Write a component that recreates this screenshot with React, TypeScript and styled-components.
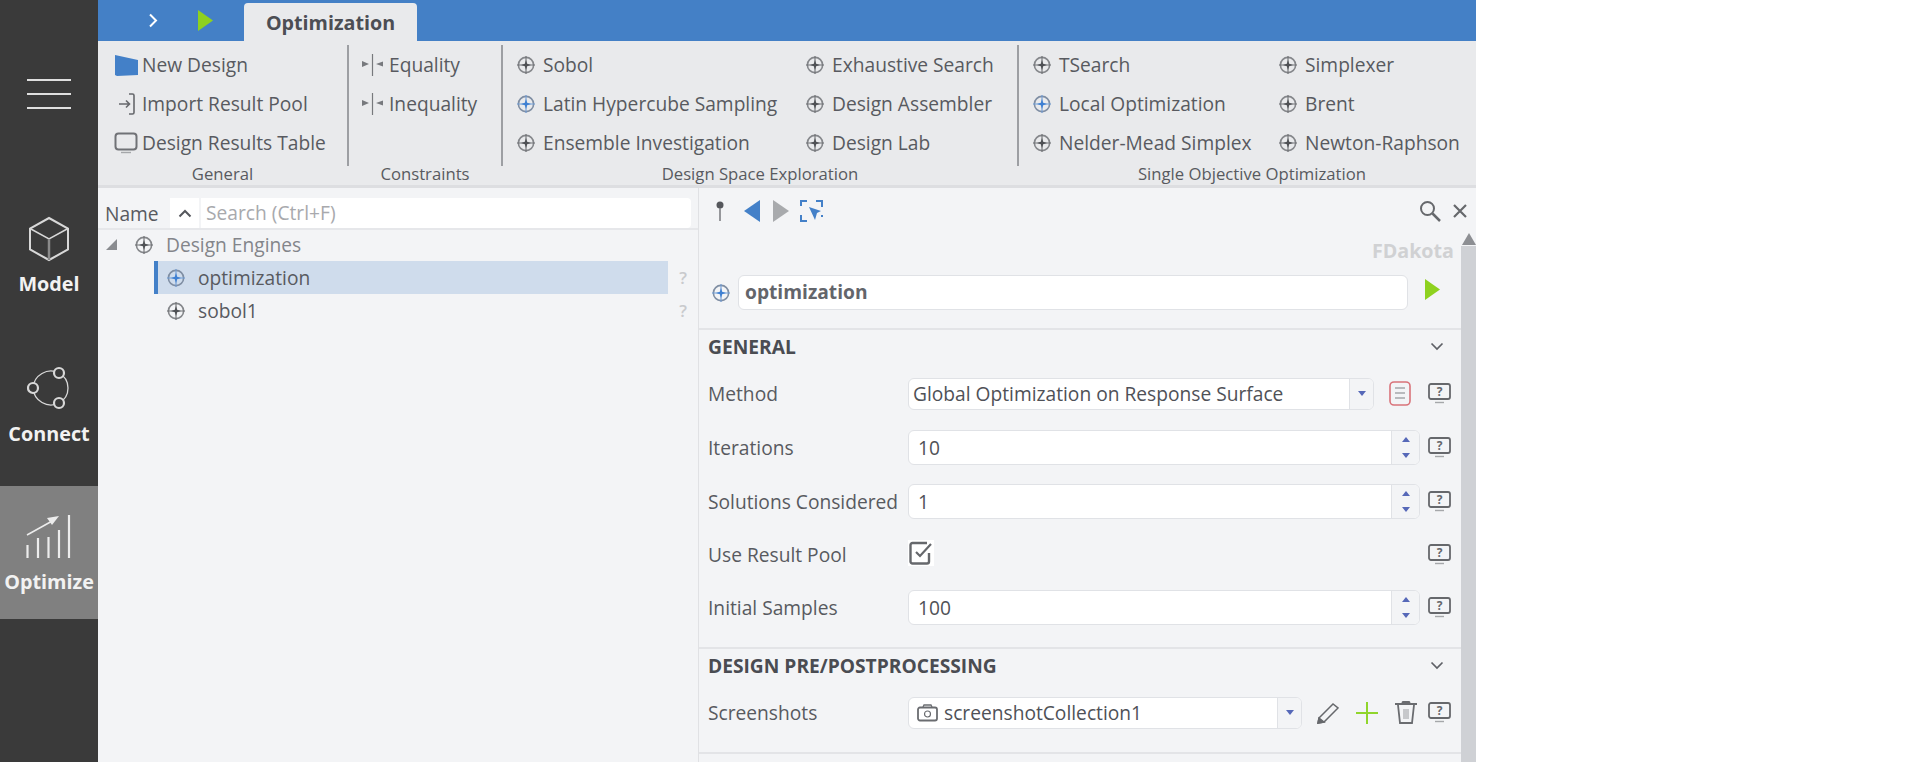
import React, { FC } from 'react';
import styled, { createGlobalStyle } from 'styled-components';

const GlobalStyle = createGlobalStyle`
  html, body {
    margin: 0;
    padding: 0;
    background: #fff;
    overflow: hidden;
  }
  * {
    box-sizing: border-box;
  }
`;

const textColor = '#585a60';
const fieldBorder = '#e0e2e6';

const Page = styled.div`
  display: flex;
  width: 1476px;
  height: 762px;
  font-family: 'Open Sans', sans-serif;
  font-size: 19.2px;
  color: ${textColor};
  overflow: hidden;
`;

const Sidebar = styled.nav`
  flex: 0 0 98px;
  display: flex;
  flex-direction: column;
  background: #3a3a3a;
`;

const Burger = styled.div`
  height: 186px;
  padding: 79px 27px 0;
  span {
    display: block;
    height: 2px;
    margin-bottom: 12px;
    background: #dfdfdf;
  }
`;

const NavItem = styled.div<{ $h: number; $active?: boolean }>`
  height: ${p => p.$h}px;
  display: flex;
  flex-direction: column;
  align-items: center;
  padding-top: ${p => (p.$active ? 28 : 30)}px;
  background: ${p => (p.$active ? '#808080' : 'transparent')};
  color: #f2f2f2;
  font-size: 19.8px;
  font-weight: 700;
  line-height: 24px;
  svg {
    margin-bottom: ${p => (p.$active ? 11 : 10)}px;
  }
`;

const Main = styled.div`
  flex: 1;
  display: flex;
  flex-direction: column;
  min-width: 0;
`;

const TopBar = styled.div`
  height: 41px;
  flex: none;
  display: flex;
  align-items: flex-end;
  padding-left: 50px;
  background: #4480c6;
`;

const TopIcons = styled.div`
  width: 96px;
  height: 41px;
  display: flex;
  align-items: center;
  gap: 40px;
`;

const Tab = styled.div`
  width: 173px;
  height: 38px;
  display: flex;
  align-items: center;
  justify-content: center;
  background: #e9eaec;
  border-radius: 4px 4px 0 0;
  font-weight: 700;
  font-size: 19.7px;
  color: #4c4e54;
`;

const Ribbon = styled.div`
  height: 147px;
  flex: none;
  display: flex;
  background: #e9eaec;
  border-bottom: 3px solid #dddee1;
`;

const Group = styled.section<{ $w: number; $pad: number }>`
  flex: 0 0 ${p => p.$w}px;
  min-width: 0;
  padding-top: 4px;
  display: flex;
  flex-direction: column;
  > div:first-child {
    padding-left: ${p => p.$pad}px;
  }
`;

const GroupItems = styled.div<{ $col?: number }>`
  height: 117px;
  display: grid;
  grid-auto-flow: column;
  grid-template-rows: repeat(3, 39px);
  grid-template-columns: ${p => (p.$col ? `${p.$col}px 1fr` : '1fr')};
`;

const GroupLabel = styled.div<{ $shift?: number }>`
  height: 24px;
  padding-left: ${p => p.$shift ?? 0}px;
  text-align: center;
  font-size: 16.7px;
  line-height: 24px;
`;

const RibbonSep = styled.div`
  flex: 0 0 2px;
  height: 121px;
  margin-top: 4px;
  background: #9d9fa3;
`;

const RibbonItem = styled.div<{ $gap?: number }>`
  display: flex;
  align-items: center;
  white-space: nowrap;
  > svg {
    flex: none;
    margin-right: ${p => p.$gap ?? 8}px;
  }
`;

const Content = styled.div`
  flex: 1;
  display: flex;
  min-height: 0;
  background: #f3f4f6;
`;

const TreePanel = styled.div`
  flex: 0 0 601px;
  display: flex;
  flex-direction: column;
  border-right: 1px solid #e0e1e4;
`;

const TreeHeader = styled.div`
  height: 32px;
  margin-top: 10px;
  padding-left: 7px;
  display: flex;
  align-items: center;
  border-bottom: 2px solid #e6e7ea;
`;

const HeaderName = styled.span`
  width: 65px;
`;

const SortButton = styled.div`
  width: 31px;
  height: 30px;
  display: flex;
  align-items: center;
  justify-content: center;
  background: #fff;
  border-right: 2px solid #f3f4f6;
`;

const SearchInput = styled.div`
  width: 490px;
  height: 30px;
  padding-left: 5px;
  line-height: 30px;
  background: #fff;
  color: #a8a9ad;
  border-radius: 0 4px 4px 0;
`;

const TreeList = styled.div`
  margin-top: -2px;
`;

const TreeRow = styled.div<{ $indent: number; $selected?: boolean; $muted?: boolean }>`
  position: relative;
  height: 33px;
  margin-left: ${p => (p.$indent ? 56 : 8)}px;
  margin-right: 30px;
  padding-left: ${p => (p.$selected ? 9 : p.$indent ? 13 : 0)}px;
  display: flex;
  align-items: center;
  background: ${p => (p.$selected ? '#cfdcec' : 'transparent')};
  border-left: ${p => (p.$selected ? '4px solid #4380c8' : 'none')};
  color: ${p => (p.$muted ? '#83858a' : textColor)};
  > svg:first-child {
    margin-right: 13px;
  }
`;

const Expander = styled.span`
  width: 0;
  height: 0;
  margin: 0 18px 0 0;
  border-left: 11px solid transparent;
  border-bottom: 11px solid #8a8c90;
`;

const BranchName = styled.span`
  margin-left: 13px;
`;

const RowHint = styled.span`
  position: absolute;
  right: -19px;
  top: 5px;
  font-size: 17px;
  font-weight: 600;
  color: #c9cacd;
`;

const DetailPanel = styled.div`
  flex: 1;
  display: flex;
  flex-direction: column;
  min-width: 0;
`;

const DetailToolbar = styled.div`
  height: 45px;
  flex: none;
  display: flex;
  align-items: center;
  padding: 0 9px 0 14px;
`;

const ToolGroup = styled.div`
  display: flex;
  align-items: center;
  gap: 11px;
  margin-right: auto;
`;

const DetailBody = styled.div`
  flex: 1;
  display: flex;
  min-height: 0;
`;

const Form = styled.div`
  flex: 1;
  min-width: 0;
`;

const Scrollbar = styled.div`
  flex: 0 0 15px;
  display: flex;
  flex-direction: column;
  align-items: center;
  &::before {
    content: '';
    height: 0;
    border-left: 7px solid transparent;
    border-right: 7px solid transparent;
    border-bottom: 12px solid #8d8f93;
  }
  &::after {
    content: '';
    flex: 1;
    width: 100%;
    margin-top: 1px;
    background: #cfd1d5;
  }
`;

const EngineTag = styled.div`
  height: 39px;
  padding-right: 7px;
  text-align: right;
  font-size: 19.7px;
  font-weight: 700;
  line-height: 36px;
  color: #d0d1d3;
`;

const NameRow = styled.div`
  height: 58px;
  padding: 0 21px 15px 13px;
  display: flex;
  align-items: center;
  border-bottom: 2px solid #e3e4e7;
`;

const NameInput = styled.div`
  flex: 1;
  height: 35px;
  margin: 0 17px 0 8px;
  padding-left: 6px;
  background: #fff;
  border: 1px solid ${fieldBorder};
  border-radius: 6px;
  font-weight: 700;
  line-height: 32px;
  color: #63656b;
`;

const RunButton = styled.span`
  display: flex;
  margin-bottom: 6px;
`;

const SectionHeader = styled.div`
  height: 36px;
  padding: 0 17px 3px 9px;
  display: flex;
  align-items: center;
  justify-content: space-between;
  font-weight: 700;
  color: #4a4c52;
`;

const Row = styled.div<{ $h: number }>`
  height: ${p => p.$h}px;
  padding: 0 10px 0 9px;
  display: flex;
  align-items: center;
`;

const RowLabel = styled.span`
  flex: 0 0 200px;
  white-space: nowrap;
`;

const Field = styled.div<{ $h: number }>`
  flex: 1;
  height: ${p => p.$h}px;
  display: flex;
  align-items: stretch;
  background: #fff;
  border: 1px solid ${fieldBorder};
  border-radius: 6px;
  overflow: hidden;
  color: #4f5157;
`;

const FieldText = styled.span<{ $pad: number }>`
  flex: 1;
  display: flex;
  align-items: center;
  gap: 6px;
  padding-left: ${p => p.$pad}px;
  white-space: nowrap;
`;

const DropButton = styled.span`
  flex: 0 0 24px;
  display: flex;
  align-items: center;
  justify-content: center;
  background: #f3f4f6;
  border-left: 1px solid ${fieldBorder};
  &::after {
    content: '';
    border-left: 4px solid transparent;
    border-right: 4px solid transparent;
    border-top: 5px solid #5668b8;
  }
`;

const Spinner = styled.span`
  flex: 0 0 28px;
  display: flex;
  flex-direction: column;
  align-items: center;
  justify-content: center;
  gap: 11px;
  background: #f3f4f6;
  border-left: 1px solid ${fieldBorder};
`;

const SpinArrow = styled.i<{ $up?: boolean }>`
  display: block;
  border-left: 4px solid transparent;
  border-right: 4px solid transparent;
  ${p => (p.$up ? 'border-bottom: 5px solid #5668b8;' : 'border-top: 5px solid #5668b8;')}
`;

const RowActions = styled.div<{ $gap: number; $left: number }>`
  flex: none;
  display: flex;
  align-items: center;
  gap: ${p => p.$gap}px;
  margin-left: ${p => p.$left}px;
`;

const CheckCell = styled.div`
  flex: 1;
  display: flex;
  align-items: center;
  padding-bottom: 3px;
`;

const Divider = styled.div<{ $top: number }>`
  height: 2px;
  margin-top: ${p => p.$top}px;
  background: #e3e4e7;
`;

const Crosshair: FC<{ blue?: boolean; size?: number }> = ({ blue, size = 18 }) => {
  const c = blue ? '#3f80d2' : '#4f5155';
  return (
    <svg width={size} height={size} viewBox="0 0 18 18" fill="none">
      <circle cx="9" cy="9" r="7.6" stroke={blue ? '#7f8ea3' : '#85878b'} strokeWidth="1.6" />
      <path d="M9 0v18M0 9h18" stroke={blue ? '#6f9bd4' : '#6e7074'} strokeWidth="1.1" />
      <path d="M9 4 10.200 7.800 14 9l-3.800 1.200L9 14l-1.200-3.800L4 9l3.800-1.200z" fill={c} />
    </svg>
  );
};

const HelpIcon: FC = () => (
  <svg width="23" height="21" viewBox="0 0 23 21" fill="none">
    <rect x="1" y="1" width="21" height="15" rx="2" stroke="#66686c" strokeWidth="1.800" />
    <path d="M7 19.500h9" stroke="#a5a7aa" strokeWidth="1.400" />
    <text x="11.500" y="13" textAnchor="middle" fontFamily="Open Sans, sans-serif" fontSize="12" fontWeight="700" fill="#66686c">?</text>
  </svg>
);

const Chevron: FC = () => (
  <svg width="14" height="9" viewBox="0 0 14 9" fill="none">
    <path d="M1.500 1.500 7 7l5.500-5.500" stroke="#5e6066" strokeWidth="1.700" />
  </svg>
);

const ConstraintIcon: FC = () => (
  <svg width="23" height="24" viewBox="0 0 23 24" fill="none">
    <path d="M11.500 1v22" stroke="#77797d" strokeWidth="1.200" />
    <path d="M1 8v6l7-3zM22 8.500v5l-7-2.500z" fill="#77797d" />
  </svg>
);

const PlayIcon: FC = () => (
  <svg width="15" height="21" viewBox="0 0 15 21">
    <path d="M0 0l15 10.500L0 21z" fill="#8ed11f" />
  </svg>
);

const groupDse = [
  ['Sobol', false],
  ['Latin Hypercube Sampling', true],
  ['Ensemble Investigation', false],
  ['Exhaustive Search', false],
  ['Design Assembler', false],
  ['Design Lab', false],
] as const;

const groupSingle = [
  ['TSearch', false],
  ['Local Optimization', true],
  ['Nelder-Mead Simplex', false],
  ['Simplexer', false],
  ['Brent', false],
  ['Newton-Raphson', false],
] as const;

const SpinField: FC<{ value: string }> = ({ value }) => (
  <Field $h={35}>
    <FieldText $pad={9}>{value}</FieldText>
    <Spinner>
      <SpinArrow $up />
      <SpinArrow />
    </Spinner>
  </Field>
);

export default function App() {
  return (
    <Page>
      <GlobalStyle />
      <Sidebar>
        <Burger>
          <span />
          <span />
          <span />
        </Burger>
        <NavItem $h={150}>
          <svg width="42" height="46" viewBox="0 0 42 46" fill="none" stroke="#d8d8d8" strokeWidth="2">
            <path d="M21 2 40 12.500v21L21 44 2 33.500v-21z" />
            <path d="M2 12.500 21 23l19-10.500" strokeWidth="1.500" />
            <path d="M21 23v21" stroke="#8a8a8a" strokeWidth="2.500" />
          </svg>
          Model
        </NavItem>
        <NavItem $h={150}>
          <svg width="44" height="46" viewBox="0 0 44 46" fill="none" stroke="#d8d8d8">
            <path d="M32 7A17 17 0 0 1 32 37M32 7A18 18 0 0 0 6 22M6 22A18 18 0 0 0 32 37" strokeWidth="1.300" />
            <circle cx="32" cy="7" r="5" strokeWidth="2.200" fill="#3a3a3a" />
            <circle cx="6" cy="22" r="5" strokeWidth="2.200" fill="#3a3a3a" />
            <circle cx="32" cy="37" r="5" strokeWidth="2.200" fill="#3a3a3a" />
          </svg>
          Connect
        </NavItem>
        <NavItem $h={133} $active>
          <svg width="46" height="45" viewBox="0 0 46 45" fill="none" stroke="#ececec">
            <path d="M1.500 44V31M12 44V24M22.500 44V23M33 44V16M43 44V1" strokeWidth="2.200" />
            <path d="M1 21 28 6" strokeWidth="1.500" />
            <path d="M33 2 21 4l5 7z" fill="#ececec" stroke="none" />
          </svg>
          Optimize
        </NavItem>
      </Sidebar>
      <Main>
        <TopBar>
          <TopIcons>
            <svg width="10" height="15" viewBox="0 0 10 15" fill="none">
              <path d="M2 1.500 8 7.500l-6 6" stroke="#fff" strokeWidth="2" />
            </svg>
            <PlayIcon />
          </TopIcons>
          <Tab>Optimization</Tab>
        </TopBar>
        <Ribbon>
          <Group $w={249} $pad={16}>
            <GroupItems>
              <RibbonItem $gap={3}>
                <svg width="25" height="22" viewBox="0 0 25 22">
                  <path d="M1 1l23 5v15l-21 1-2-1z" fill="#4380c8" />
                </svg>
                New Design
              </RibbonItem>
              <RibbonItem $gap={3}>
                <svg width="25" height="22" viewBox="0 0 25 22" fill="none" stroke="#66686c" strokeWidth="1.600">
                  <path d="M5 11h10M12 7.500l3.500 3.500-3.500 3.500" />
                  <path d="M15 1h3.500a1.500 1.500 0 0 1 1.500 1.500v17a1.500 1.500 0 0 1-1.500 1.500H15" />
                </svg>
                Import Result Pool
              </RibbonItem>
              <RibbonItem $gap={3}>
                <svg width="25" height="22" viewBox="0 0 25 22" fill="none">
                  <rect x="1.500" y="1.500" width="21" height="16" rx="3" stroke="#707276" strokeWidth="2" />
                  <path d="M7 20.500h10" stroke="#a5a7aa" strokeWidth="1.400" />
                </svg>
                Design Results Table
              </RibbonItem>
            </GroupItems>
            <GroupLabel>General</GroupLabel>
          </Group>
          <RibbonSep />
          <Group $w={152} $pad={12}>
            <GroupItems>
              <RibbonItem $gap={5}>
                <ConstraintIcon />
                Equality
              </RibbonItem>
              <RibbonItem $gap={5}>
                <ConstraintIcon />
                Inequality
              </RibbonItem>
            </GroupItems>
            <GroupLabel>Constraints</GroupLabel>
          </Group>
          <RibbonSep />
          <Group $w={514} $pad={14}>
            <GroupItems $col={289}>
              {groupDse.map(([name, blue]) => (
                <RibbonItem key={name}>
                  <Crosshair blue={blue} />
                  {name}
                </RibbonItem>
              ))}
            </GroupItems>
            <GroupLabel>Design Space Exploration</GroupLabel>
          </Group>
          <RibbonSep />
          <Group $w={458} $pad={14}>
            <GroupItems $col={246}>
              {groupSingle.map(([name, blue]) => (
                <RibbonItem key={name}>
                  <Crosshair blue={blue} />
                  {name}
                </RibbonItem>
              ))}
            </GroupItems>
            <GroupLabel $shift={8}>Single Objective Optimization</GroupLabel>
          </Group>
        </Ribbon>
        <Content>
          <TreePanel>
            <TreeHeader>
              <HeaderName>Name</HeaderName>
              <SortButton>
                <svg width="14" height="9" viewBox="0 0 14 9" fill="none">
                  <path d="M1.500 7.500 7 2l5.500 5.500" stroke="#55575c" strokeWidth="2" />
                </svg>
              </SortButton>
              <SearchInput>Search (Ctrl+F)</SearchInput>
            </TreeHeader>
            <TreeList>
              <TreeRow $indent={0} $muted>
                <Expander />
                <Crosshair />
                <BranchName>Design Engines</BranchName>
              </TreeRow>
              <TreeRow $indent={1} $selected>
                <Crosshair blue />
                optimization
                <RowHint>?</RowHint>
              </TreeRow>
              <TreeRow $indent={1}>
                <Crosshair />
                sobol1
                <RowHint>?</RowHint>
              </TreeRow>
            </TreeList>
          </TreePanel>
          <DetailPanel>
            <DetailToolbar>
              <ToolGroup>
                <svg width="14" height="22" viewBox="0 0 14 22" fill="none">
                  <circle cx="7" cy="5" r="3.500" fill="#55575c" />
                  <path d="M7 8v13" stroke="#77797d" strokeWidth="1.500" />
                </svg>
                <svg width="16" height="22" viewBox="0 0 16 22" style={{ marginLeft: 6 }}>
                  <path d="M16 0v22L0 11z" fill="#4380c8" />
                </svg>
                <svg width="16" height="22" viewBox="0 0 16 22" style={{ marginLeft: 2 }}>
                  <path d="M0 0v22l16-11z" fill="#a8aaad" />
                </svg>
                <svg width="23" height="22" viewBox="0 0 23 22" fill="none" stroke="#4380c8" strokeWidth="2">
                  <path d="M1 6V1h6M16 1h6v6M1 15v6h6M22 15v2" />
                  <path d="M9 7l12 4-4 2-2 7z" fill="#4380c8" stroke="none" />
                </svg>
              </ToolGroup>
              <svg width="22" height="22" viewBox="0 0 22 22" fill="none" stroke="#66686c" strokeWidth="2" style={{ marginRight: 12 }}>
                <circle cx="8.500" cy="8.500" r="6.500" />
                <path d="M13.500 13.500 21 21" strokeWidth="2.500" />
              </svg>
              <svg width="14" height="14" viewBox="0 0 14 14" fill="none" stroke="#66686c" strokeWidth="2.200">
                <path d="M1 1l12 12M13 1 1 13" />
              </svg>
            </DetailToolbar>
            <DetailBody>
              <Form>
                <EngineTag>FDakota</EngineTag>
                <NameRow>
                  <Crosshair blue />
                  <NameInput>optimization</NameInput>
                  <RunButton>
                    <PlayIcon />
                  </RunButton>
                </NameRow>
                <SectionHeader>
                  GENERAL
                  <Chevron />
                </SectionHeader>
                <Row $h={55}>
                  <RowLabel>Method</RowLabel>
                  <Field $h={32}>
                    <FieldText $pad={4}>Global Optimization on Response Surface</FieldText>
                    <DropButton />
                  </Field>
                  <RowActions $gap={17} $left={15}>
                    <svg width="22" height="25" viewBox="0 0 22 25" fill="none">
                      <rect x="1" y="1" width="20" height="23" rx="4" stroke="#d9737a" strokeWidth="1.600" />
                      <path d="M6 7h10M6 12h10M6 17h10" stroke="#a5a7aa" strokeWidth="1.500" />
                    </svg>
                    <HelpIcon />
                  </RowActions>
                </Row>
                <Row $h={53}>
                  <RowLabel>Iterations</RowLabel>
                  <SpinField value="10" />
                  <RowActions $gap={0} $left={8}>
                    <HelpIcon />
                  </RowActions>
                </Row>
                <Row $h={54}>
                  <RowLabel>Solutions Considered</RowLabel>
                  <SpinField value="1" />
                  <RowActions $gap={0} $left={8}>
                    <HelpIcon />
                  </RowActions>
                </Row>
                <Row $h={53}>
                  <RowLabel>Use Result Pool</RowLabel>
                  <CheckCell>
                    <svg width="26" height="26" viewBox="0 0 26 26" fill="none">
                      <rect width="26" height="26" fill="#fff" />
                      <path d="M21 13v8.500a2 2 0 0 1-2 2H4.500a2 2 0 0 1-2-2V5a2 2 0 0 1 2-2H19" stroke="#66686c" strokeWidth="2.400" />
                      <path d="M8 12l4 4 11-12" stroke="#66686c" strokeWidth="2.200" />
                    </svg>
                  </CheckCell>
                  <RowActions $gap={0} $left={8}>
                    <HelpIcon />
                  </RowActions>
                </Row>
                <Row $h={53}>
                  <RowLabel>Initial Samples</RowLabel>
                  <SpinField value="100" />
                  <RowActions $gap={0} $left={8}>
                    <HelpIcon />
                  </RowActions>
                </Row>
                <Divider $top={13} />
                <SectionHeader>
                  DESIGN PRE/POSTPROCESSING
                  <Chevron />
                </SectionHeader>
                <Row $h={55}>
                  <RowLabel>Screenshots</RowLabel>
                  <Field $h={32}>
                    <FieldText $pad={8}>
                      <svg width="21" height="18" viewBox="0 0 21 18" fill="none" stroke="#6a6c70">
                        <rect x="1" y="3.500" width="19" height="13" rx="2" strokeWidth="1.800" />
                        <path d="M6 3l1-2h7l1 2" strokeWidth="1.300" />
                        <circle cx="10.500" cy="10" r="3" strokeWidth="1.200" />
                      </svg>
                      screenshotCollection1
                    </FieldText>
                    <DropButton />
                  </Field>
                  <RowActions $gap={17} $left={15}>
                    <svg width="22" height="22" viewBox="0 0 22 22" fill="none" stroke="#66686c" strokeWidth="1.500">
                      <path d="M2 16 16 2l5 4L7 20l-6 1z" />
                      <path d="M1 21l1-5 5 4z" fill="#66686c" />
                    </svg>
                    <svg width="22" height="22" viewBox="0 0 22 22" fill="none" stroke="#90d52c" strokeWidth="2">
                      <path d="M11 0v22M0 11h22" />
                    </svg>
                    <svg width="22" height="23" viewBox="0 0 22 23" fill="none" stroke="#6a6c70" strokeWidth="1.800" style={{ marginRight: -6 }}>
                      <path d="M0 3h22M7 2l1-1h6l1 1" />
                      <path d="M3 4l2 18h12l2-18" />
                      <path d="M9 8v10M11 8v10M13 8v10" strokeWidth="1" stroke="#9a9ca0" />
                    </svg>
                    <HelpIcon />
                  </RowActions>
                </Row>
                <Divider $top={12} />
              </Form>
              <Scrollbar />
            </DetailBody>
          </DetailPanel>
        </Content>
      </Main>
    </Page>
  );
}
